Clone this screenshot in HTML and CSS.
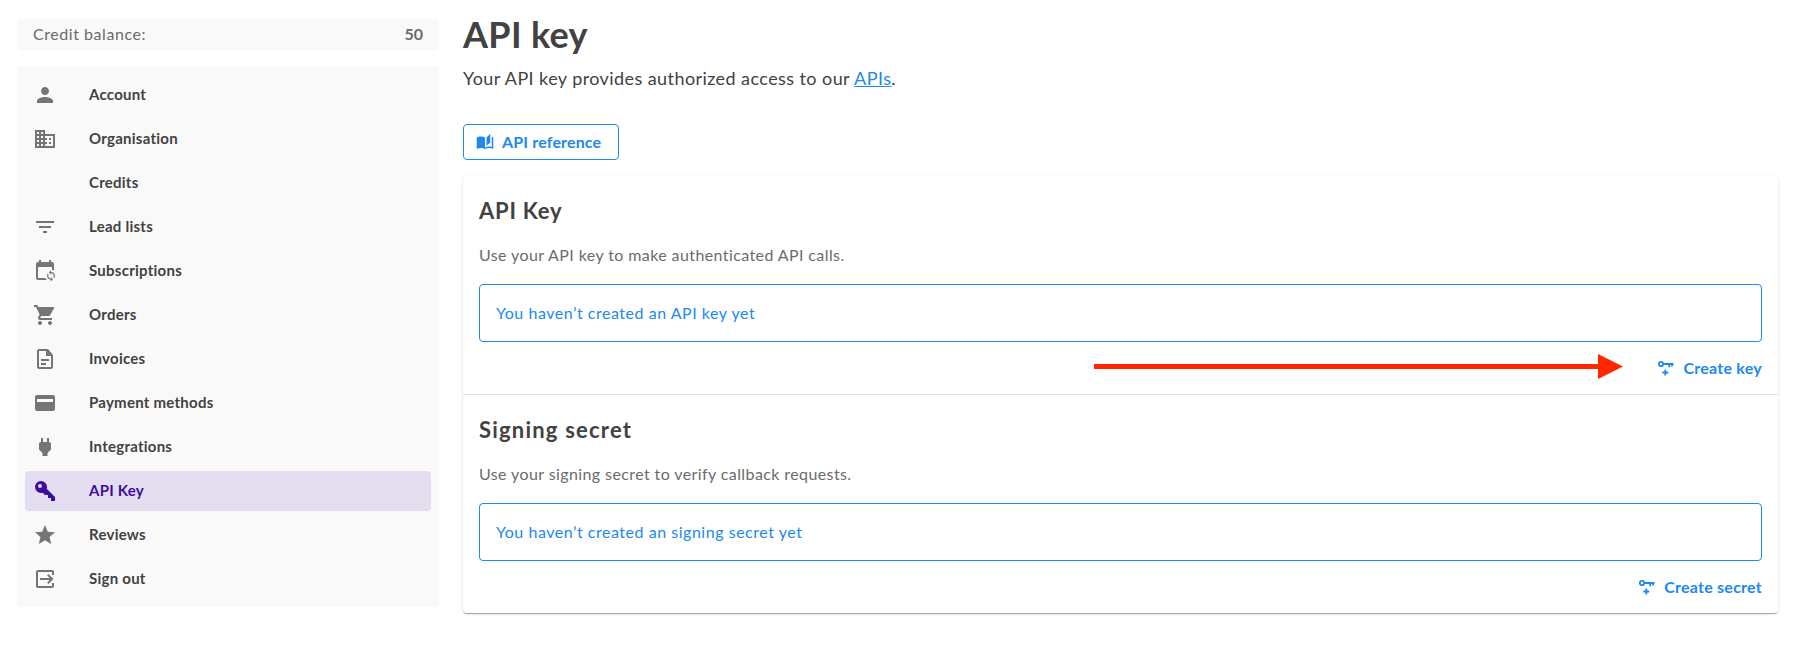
FILE: index.html
```html
<!DOCTYPE html>
<html lang="en">
<head>
<meta charset="utf-8">
<title>API key</title>
<link rel="stylesheet" href="styles.css">
</head>
<body>
<div class="page">
  <aside class="sidebar">
    <div class="balance"><span class="balance-label">Credit balance:</span><strong class="balance-value">50</strong></div>
    <nav class="nav">
      <a class="nav-item"><svg class="icon" viewBox="0 0 24 24"><path d="M12 12c2.21 0 4-1.79 4-4s-1.79-4-4-4-4 1.79-4 4 1.79 4 4 4zm0 2c-2.67 0-8 1.34-8 4v2h16v-2c0-2.66-5.33-4-8-4z"/></svg><span class="nav-label">Account</span></a>
      <a class="nav-item"><svg class="icon" viewBox="0 0 24 24"><path d="M12 7V3H2v18h20V7H12zM6 19H4v-2h2v2zm0-4H4v-2h2v2zm0-4H4V9h2v2zm0-4H4V5h2v2zm4 12H8v-2h2v2zm0-4H8v-2h2v2zm0-4H8V9h2v2zm0-4H8V5h2v2zm10 12h-8v-2h2v-2h-2v-2h2v-2h-2V9h8v10zm-2-8h-2v2h2v-2zm0 4h-2v2h2v-2z"/></svg><span class="nav-label">Organisation</span></a>
      <a class="nav-item"><span class="icon"></span><span class="nav-label">Credits</span></a>
      <a class="nav-item"><svg class="icon" viewBox="0 0 24 24"><path d="M10 18h4v-2h-4v2zM3 6v2h18V6H3zm3 7h12v-2H6v2z"/></svg><span class="nav-label">Lead lists</span></a>
      <a class="nav-item"><svg class="icon" viewBox="0 0 24 24"><path d="M5 3h1V1h2v2h8V1h2v2h1c1.100 0 2 .9 2 2v6h-2V8H5v11h7l2 2H5c-1.110 0-2-.9-2-2V5c0-1.100.9-2 2-2z"/><path transform="translate(12.200 11.100) scale(.48)" d="M12 4V1L8 5l4 4V6c3.310 0 6 2.690 6 6 0 1.010-.25 1.970-.7 2.800l1.460 1.460C19.540 15.030 20 13.570 20 12c0-4.420-3.580-8-8-8zm0 14c-3.310 0-6-2.690-6-6 0-1.010.25-1.970.7-2.800L5.240 7.740C4.460 8.970 4 10.430 4 12c0 4.420 3.580 8 8 8v3l4-4-4-4v3z" stroke="currentColor" stroke-width=".6"/></svg><span class="nav-label">Subscriptions</span></a>
      <a class="nav-item"><svg class="icon" viewBox="0 0 24 24"><path d="M7 18c-1.100 0-1.990.9-1.990 2S5.900 22 7 22s2-.9 2-2-.9-2-2-2zM1 2v2h2l3.600 7.590-1.350 2.450c-.16.28-.25.61-.25.96 0 1.100.9 2 2 2h12v-2H7.420c-.14 0-.25-.11-.25-.25l.03-.12.900-1.630h7.450c.75 0 1.410-.41 1.750-1.030l3.580-6.490A1 1 0 0 0 20 4H5.210l-.94-2H1zm16 16c-1.100 0-1.990.9-1.990 2s.89 2 1.990 2 2-.9 2-2-.9-2-2-2z"/></svg><span class="nav-label">Orders</span></a>
      <a class="nav-item"><svg class="icon" viewBox="0 0 24 24"><path fill-rule="evenodd" d="M6 2h9l5 6v12c0 1.100-.9 2-2 2H6c-1.100 0-2-.9-2-2V4c0-1.100.9-2 2-2zm0 2v16h12V9h-5V4zM8 12h8v2H8zM8 16h5v2H8z"/></svg><span class="nav-label">Invoices</span></a>
      <a class="nav-item"><svg class="icon" viewBox="0 0 24 24"><path fill-rule="evenodd" d="M4 4h16c1.110 0 2 .89 2 2v12c0 1.110-.89 2-2 2H4c-1.110 0-2-.89-2-2V6c0-1.110.89-2 2-2zm0 4v3h16V8z"/></svg><span class="nav-label">Payment methods</span></a>
      <a class="nav-item"><svg class="icon" viewBox="0 0 24 24"><path d="M16 7V3h-2v4h-4V3H8v4C6.900 7 6 7.900 6 9v5.500L9.500 18v3h5v-3l3.500-3.500V9c0-1.100-.9-2-2-2z"/></svg><span class="nav-label">Integrations</span></a>
      <a class="nav-item nav-item-active"><svg class="icon" viewBox="0 0 24 24"><path fill-rule="evenodd" d="M22 18v4h-4v-3h-3v-3h-3l-2.260-2.260c-.55.17-1.130.26-1.740.26A6 6 0 1 1 14 8c0 .61-.09 1.190-.26 1.740zM7 5a2 2 0 1 0 0 4 2 2 0 0 0 0-4z"/></svg><span class="nav-label">API Key</span></a>
      <a class="nav-item"><svg class="icon" viewBox="0 0 24 24"><path d="M12 17.270L18.180 21l-1.640-7.030L22 9.240l-7.190-.61L12 2 9.190 8.630 2 9.240l5.460 4.730L5.820 21z"/></svg><span class="nav-label">Reviews</span></a>
      <a class="nav-item"><svg class="icon" viewBox="0 0 24 24"><path d="M5 3h14c1.100 0 2 .9 2 2v3h-2V5H5v14h14v-3h2v3c0 1.100-.9 2-2 2H5c-1.100 0-2-.9-2-2V5c0-1.100.9-2 2-2zM7 11h9.670l-2.580-2.590L15.500 7l5 5-5 5-1.410-1.410L16.670 13H7z"/></svg><span class="nav-label">Sign out</span></a>
    </nav>
  </aside>
  <main class="main">
    <h1 class="title">API key</h1>
    <p class="intro">Your API key provides authorized access to our <a class="link">APIs</a>.</p>
    <a class="button"><svg class="icon-small" viewBox="0 0 24 24"><path d="M19 1l-5 5v11l5-4.500V1zM1 6v14.650c0 .25.25.5.5.5.1 0 .15-.05.25-.05C3.100 20.450 5.050 20 6.500 20c1.950 0 4.050.4 5.500 1.500V6c-1.450-1.100-3.550-1.500-5.500-1.500S2.450 4.900 1 6zm22 13.500V6c-.6-.45-1.250-.75-2-1v13.500c-1.100-.35-2.300-.5-3.500-.5-1.700 0-4.150.65-5.500 1.500v2c1.350-.85 3.800-1.500 5.500-1.500 1.650 0 3.350.3 4.750 1.050.1.05.15.05.25.05.25 0 .5-.25.5-.5v-1.100z"/></svg><span class="button-label">API reference</span></a>
    <div class="card">
      <section class="section">
        <h2 class="section-title">API Key</h2>
        <p class="description">Use your API key to make authenticated API calls.</p>
        <div class="notice">You haven’t created an API key yet</div>
        <div class="actions"><svg class="arrow" viewBox="0 0 530 26"><path d="M0 10h504V0l25 12.500L504 25V15H0z"/></svg><a class="action"><svg class="icon-key" viewBox="0 0 16 16"><circle cx="3" cy="4" r="2.200"/><path d="M5.200 4H15.500M11.200 4v3.200M14 4v2.500M7.300 9.500v6M4.300 12.500h6"/></svg><span>Create key</span></a></div>
      </section>
      <section class="section">
        <h2 class="section-title section-title-wide">Signing secret</h2>
        <p class="description">Use your signing secret to verify callback requests.</p>
        <div class="notice">You haven’t created an signing secret yet</div>
        <div class="actions"><a class="action"><svg class="icon-key" viewBox="0 0 16 16"><circle cx="3" cy="4" r="2.200"/><path d="M5.200 4H15.500M11.200 4v3.200M14 4v2.500M7.300 9.500v6M4.300 12.500h6"/></svg><span>Create secret</span></a></div>
      </section>
    </div>
  </main>
</div>
</body>
</html>
```
FILE: styles.css
```css
* { box-sizing: border-box; }
body { margin: 0; background: #fff; color: #424242; font-family: Lato, "Open Sans", sans-serif; }
h1, h2, p { margin: 0; }
svg { display: block; flex: none; fill: currentColor; }
.page { display: flex; align-items: flex-start; gap: 24px; min-height: 100vh; padding: 0 20px 0 17px; }
.sidebar { width: 422px; padding-top: 19px; display: flex; flex-direction: column; gap: 16px; flex: none; }
.balance { display: flex; justify-content: space-between; height: 32px; padding: 0 16px; border-radius: 4px; background: #f9f9f9; font-size: 16px; line-height: 30px; letter-spacing: .55px; color: #6b6b6b; }
.balance-value { font-weight: 700; letter-spacing: 0; }
.nav { display: flex; flex-direction: column; gap: 4px; padding: 8px; background: #f9f9f9; }
.nav-item { display: flex; align-items: center; gap: 32px; height: 40px; padding-left: 8px; border-radius: 4px; font-size: 15px; font-weight: 700; letter-spacing: .25px; }
.nav-label { padding-bottom: 2px; }
.icon { width: 24px; height: 24px; color: #757575; }
.nav-item-active, .nav-item-active .icon { color: #3f0ca3; }
.nav-item-active { background: #e4ddef; }
.main { flex: 1; display: flex; flex-direction: column; align-items: flex-start; padding-top: 11px; }
.title { font-size: 36px; line-height: 46px; font-weight: 700; letter-spacing: .3px; }
.intro { font-size: 18px; line-height: 28px; letter-spacing: .42px; margin: 7px 0 32px; }
.link { color: #2089ef; text-decoration: underline; }
.button { display: flex; align-items: center; gap: 8px; width: 156px; height: 36px; padding-left: 12px; border: 1px solid #2089ef; border-radius: 4px; color: #2089ef; font-size: 16px; font-weight: 700; letter-spacing: .15px; }
.button-label { padding-bottom: 1px; }
.icon-small { width: 18px; height: 18px; }
.card { width: 100%; height: 437px; margin-top: 16px; border-radius: 4px; box-shadow: 0 2px 1px -1px rgba(0,0,0,.2), 0 1px 1px 0 rgba(0,0,0,.14), 0 1px 3px 0 rgba(0,0,0,.12); }
.section { padding: 20px 16px 0; height: 219px; }
.section + .section { height: 218px; }
.section:first-child { border-bottom: 1px solid #e0e0e0; }
.section-title { font-size: 22px; line-height: 30px; font-weight: 700; letter-spacing: .75px; }
.section-title-wide { letter-spacing: 1.2px; }
.description { margin-top: 17px; font-size: 16px; line-height: 24px; letter-spacing: .4px; color: #6b6b6b; }
.notice { height: 58px; margin-top: 17px; padding: 0 16px; border: 1px solid #2089ef; border-radius: 4px; color: #2089ef; font-size: 16px; line-height: 56px; letter-spacing: .53px; }
.actions { display: flex; justify-content: flex-end; align-items: center; height: 50px; color: #2089ef; font-size: 16px; font-weight: 700; letter-spacing: .25px; }
.action { display: flex; align-items: center; gap: 9px; padding-top: 1px; }
.icon-key { width: 16px; height: 16px; fill: none; stroke: currentColor; stroke-width: 1.8; }
.arrow { width: 530px; height: 26px; color: #ff2600; margin-right: 34px; }
```
